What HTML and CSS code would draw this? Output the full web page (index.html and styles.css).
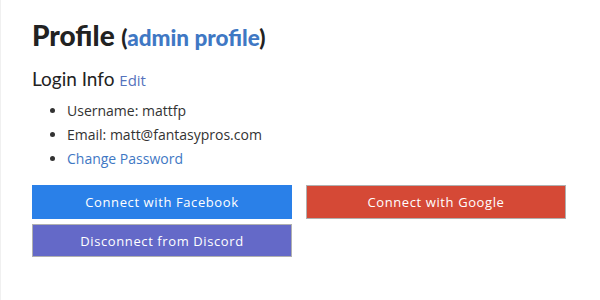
FILE: index.html
```html
<!DOCTYPE html>
<html lang="en">
<head>
  <meta charset="UTF-8">
  <title>Profile</title>
  <link rel="stylesheet" href="styles.css">
</head>
<body>

  <div class="page">
    <h1>Profile <span class="sub">(<a>admin profile</a>)</span></h1>

    <h2>Login Info <a class="edit">Edit</a></h2>
    <ul class="info">
      <li>Username: mattfp</li>
      <li>Email: matt@fantasypros.com</li>
      <li><a>Change Password</a></li>
    </ul>

    <!-- social accounts -->
    <div class="social">
      <button class="btn facebook">Connect with Facebook</button>
      <button class="btn google">Connect with Google</button>
      <button class="btn discord">Disconnect from Discord</button>
    </div>
  </div>

</body>
</html>
```

FILE: styles.css
```css
* { box-sizing: border-box; }
body {
  margin: 0;
  height: 300px;
  font-family: 'Open Sans', sans-serif;
  color: #333;
  background: #fff;
}

.page {
  height: 100%;
  padding: 19px 31px;
  border-left: 1px solid #f0f0f0;
}

a { color: #3f78c4; cursor: pointer; }

h1 {
  margin: 0;
  font-family: 'Lato', sans-serif;
  font-size: 28px;
  font-weight: 900;
  color: #222;
  line-height: 32px;
}

h1 .sub { font-size: 22.5px; font-weight: 900; }

h2 {
  margin: 13px 0 0;
  font-family: 'Lato', sans-serif;
  font-size: 19px;
  font-weight: 400;
  color: #222;
  line-height: 24px;
}

h2 .edit {
  font-family: 'Open Sans', sans-serif;
  font-size: 15px;
  color: #5573bd;
}

.info {
  margin: 7px 0 14px;
  padding-left: 35px;
  font-size: 14px;
  line-height: 24px;
}

.social {
  display: grid;
  grid-template-columns: 260px 260px;
  gap: 5px 14px;
}

.btn {
  height: 34px;
  border: 1px solid #b0b0b0;
  color: white;
  font-family: 'Open Sans', sans-serif;
  font-size: 13px;
  letter-spacing: 0.6px;
  cursor: pointer;
}

.facebook { background: #2a80e8; border-color: #2a80e8; }
.google { background: #d54936; }
.discord { background: #6469c8; height: 33px; }
```
